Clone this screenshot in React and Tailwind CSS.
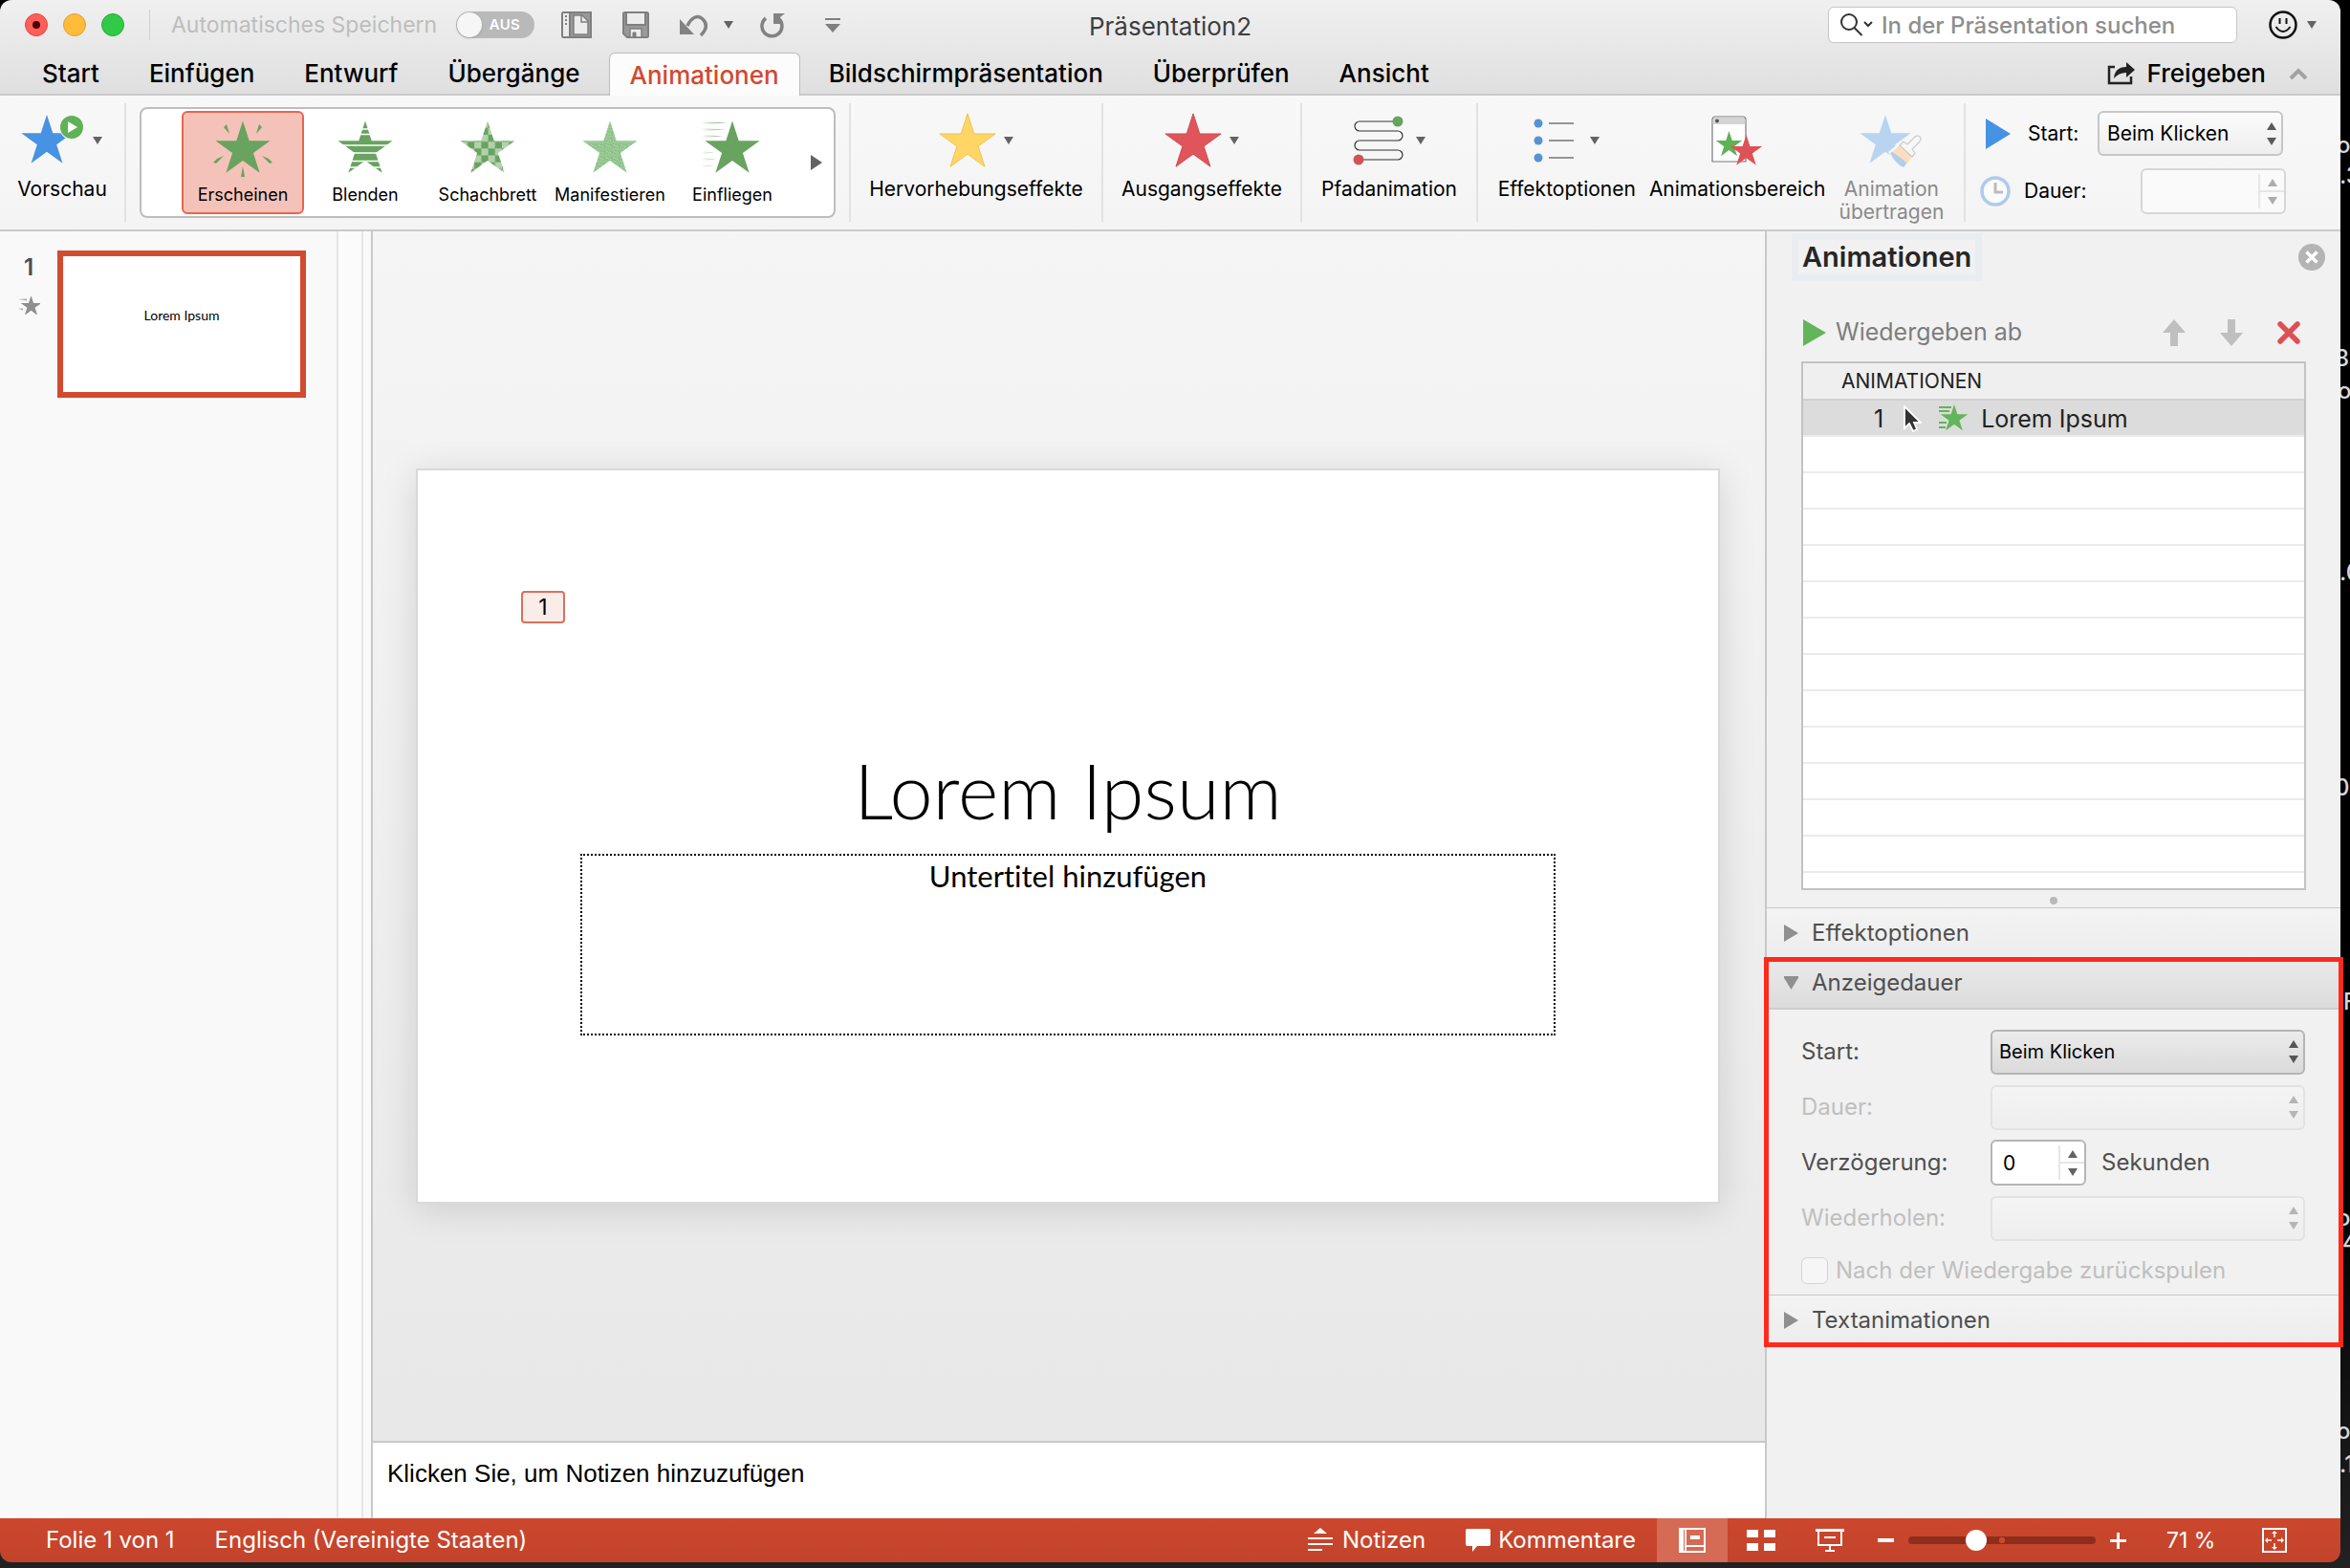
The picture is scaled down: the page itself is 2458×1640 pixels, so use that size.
import React, { useState } from 'react';

const STAR = '50,0 61.2,34.5 97.6,34.5 68.2,55.9 79.4,90.5 50,69.1 20.6,90.5 31.8,55.9 2.4,34.5 38.8,34.5';

const tabs = ['Start', 'Einfügen', 'Entwurf', 'Übergänge', 'Animationen', 'Bildschirmpräsentation', 'Überprüfen', 'Ansicht'];

const desktopLabels = [
  { text: 'o', top: 138, left: 2 },
  { text: '.3', top: 170, left: 5 },
  { text: '8', top: 361, left: 0 },
  { text: 'o', top: 395, left: 3 },
  { text: '.0', top: 585, left: 5 },
  { text: '01', top: 810, left: 0 },
  { text: 'F', top: 1034, left: 9 },
  { text: 'o', top: 1260, left: 2 },
  { text: '4', top: 1286, left: 8 },
  { text: 'o', top: 1483, left: 2 },
  { text: '.1', top: 1518, left: 5 },
];

const Caret = ({ className = '' }) => (
  <svg className={`w-[10px] h-2 shrink-0 fill-[#636363] ${className}`} viewBox="0 0 10 8">
    <path d="M0 0h10L5 8z" />
  </svg>
);

const UpDown = ({ className = '' }) => (
  <svg className={`absolute right-[7px] top-1/2 -translate-y-1/2 w-[10px] h-[24px] pointer-events-none ${className}`} viewBox="0 0 10 24">
    <path d="M0 8h10L5 0zM0 16h10L5 24z" />
  </svg>
);

/* ---------- Effect icons ---------- */

const GalleryStar = ({ fill = '#68a35f', children, before }) => (
  <svg className="w-[68px] h-[60px]" viewBox="0 0 68 60">
    {before}
    <polygon points={STAR} fill={fill} transform="translate(4 0.5) scale(.6)" />
    {children}
  </svg>
);

const AppearIcon = () => (
  <GalleryStar>
    <g fill="#68a35f">
      <path d="M14 7l3-3 3 10zM54 7l-3-3-3 10zM3 44l4-4 7-3-8 8zM65 44l-4-4-7-3 8 8zM34 48l2 11h-4z" />
    </g>
  </GalleryStar>
);

const BlindsIcon = () => (
  <GalleryStar>
    <path d="M0 9h68M0 14.500h68M0 26h68M0 34h68M0 42.500h68M0 49h68" stroke="#fff" strokeWidth="1.500" />
  </GalleryStar>
);

const CheckerIcon = () => (
  <GalleryStar
    fill="url(#checker)"
    before={
      <defs>
        <pattern id="checker" width="24" height="24" x="3" patternUnits="userSpaceOnUse">
          <rect width="24" height="24" fill="#b3d1ae" />
          <path d="M0 0h12v12H0zM12 12h12v12H12z" fill="#68a35f" />
        </pattern>
      </defs>
    }
  />
);

const DissolveIcon = () => (
  <GalleryStar
    fill="url(#dissolve)"
    before={
      <defs>
        <pattern id="dissolve" width="13" height="11" patternUnits="userSpaceOnUse">
          <rect width="13" height="11" fill="#9ccb97" />
          <path d="M0 1h3v2H0zM5 0h2v3H5zM9 2h3v2H9zM2 5h3v2H2zM7 6h2v3H7zM11 7h2v2h-2zM0 9h3v2H0z" fill="#7db677" />
          <path d="M3 3h2v2H3zM8 4h2v1H8zM5 9h2v2H5zM11 0h2v2h-2z" fill="#b4dab0" />
        </pattern>
      </defs>
    }
  />
);

const FlyInIcon = () => (
  <GalleryStar
    before={
      <defs>
        <linearGradient id="speed">
          <stop offset="0" stopColor="#68a35f" stopOpacity="0" />
          <stop offset="1" stopColor="#68a35f" />
        </linearGradient>
      </defs>
    }
  >
    <path d="M2 1l27 1.500-27 1.500zM2 8l24 1.500-24 1.500zM2 15l22 1.500-22 1.500zM2 32l13 1.500-13 1.500zM2 39l15 1.500-15 1.500zM2 46l12 1.500-12 1.500z" fill="url(#speed)" />
  </GalleryStar>
);

const BigStar = ({ fill, stroke }) => (
  <svg className="w-[60px] h-[58px]" viewBox="1 -1 98 94">
    <polygon points={STAR} fill={fill} stroke={stroke} strokeWidth="1.500" />
  </svg>
);

const PreviewIcon = () => (
  <svg className="w-[66px] h-[58px]" viewBox="0 0 66 58">
    <polygon points={STAR} fill="#4692e3" transform="translate(-2 2) scale(.56)" />
    <circle cx="52" cy="15" r="13" fill="#f6f6f6" />
    <circle cx="52" cy="15" r="12" fill="#5fb256" />
    <path d="M48 9v12l10-6z" fill="#fff" />
  </svg>
);

const PathIcon = () => (
  <svg className="w-[58px] h-[56px]" viewBox="0 0 58 56" fill="none">
    <path d="M46 8H7a5 5 0 0 0 0 10h40a5 5 0 0 1 0 10H7a5 5 0 0 0 0 10h40a5 5 0 0 1 0 10H6" stroke="#333" strokeWidth="1.200" />
    <circle cx="47" cy="8" r="5.500" fill="#68a35f" />
    <circle cx="6" cy="48" r="5.500" fill="#cf5458" />
  </svg>
);

const OptionsIcon = () => (
  <svg className="w-[51px] h-[56px]" viewBox="0 0 51 56">
    <g fill="#5792d3">
      <circle cx="5" cy="10" r="4.500" />
      <circle cx="5" cy="28" r="4.500" />
      <circle cx="5" cy="46" r="4.500" />
    </g>
    <path d="M16 10h26M16 28h26M16 46h26" stroke="#333" strokeWidth="1.200" />
  </svg>
);

const PaneIcon = () => (
  <svg className="w-[54px] h-[56px]" viewBox="0 0 54 56">
    <path d="M1 50V6a3 3 0 0 1 3-3h29a3 3 0 0 1 3 3v44z" fill="#fff" stroke="#777" strokeWidth="1.200" />
    <path d="M1.600 11V6a2.400 2.400 0 0 1 2.400-2.400h29a2.400 2.400 0 0 1 2.400 2.400v5z" fill="#d4d4d4" />
    <circle cx="6" cy="7.500" r="2" fill="#555" />
    <polygon points={STAR} fill="#5fb256" transform="translate(4 18) scale(.29)" />
    <polygon points={STAR} fill="#dc5257" transform="translate(19 22) scale(.35)" />
  </svg>
);

const PainterIcon = () => (
  <svg className="w-[66px] h-[58px]" viewBox="0 0 66 58">
    <polygon points={STAR} fill="#b9d4f0" transform="translate(-1 2) scale(.56)" />
    <path d="M30 41l13-11 15 14-9 14q-13-3-19-17z" fill="#f6f6f6" />
    <path d="M32 42l4-2 14 12-4 5q-9-4-14-15z" fill="#b2cdee" />
    <path d="M34 41l8-7 13 12-5 7q-6-6-16-12z" fill="#f9dfbd" />
    <path d="M42 34l4-4 4 3 8-8q3-2 5 0t0 5l-8 8 3 4-3 4z" fill="#f7f7f7" stroke="#cbcbcb" strokeWidth="1.200" />
  </svg>
);

const effects = [
  { name: 'Erscheinen', Icon: AppearIcon },
  { name: 'Blenden', Icon: BlindsIcon },
  { name: 'Schachbrett', Icon: CheckerIcon },
  { name: 'Manifestieren', Icon: DissolveIcon },
  { name: 'Einfliegen', Icon: FlyInIcon },
];

/* ---------- Header ---------- */

const TitleBar = () => (
  <div className="grid grid-cols-[1fr_auto_1fr] items-center h-[52px]">
    <div className="flex items-center pl-[26px]">
      <div className="flex gap-4">
        <button aria-label="Schließen" className="size-6 rounded-full bg-[#ff5f57] border border-[#e2463f] flex items-center justify-center">
          <span className="size-2 rounded-full bg-[#4d0000]" />
        </button>
        <button aria-label="Minimieren" className="size-6 rounded-full bg-[#febc3a] border border-[#e0a02d]" />
        <button aria-label="Vollbild" className="size-6 rounded-full bg-[#33c948] border border-[#25ad37]" />
      </div>
      <div className="w-px h-8 bg-[#cfcfcf] ml-[26px] mr-[22px]" />
      <label htmlFor="autosave" className="text-[23px] text-[#bdbdbd]">Automatisches Speichern</label>
      <span className="relative ml-5 w-[82px] h-7 rounded-full bg-[#b9b9b9] text-white text-[15px] font-semibold flex items-center justify-end pr-[15px] tracking-wide">
        <input id="autosave" type="checkbox" role="switch" className="absolute inset-0 opacity-0" />
        <span className="absolute left-px top-px size-[26px] rounded-full bg-[#f6f6f6] shadow" />
        AUS
      </span>
      <button aria-label="Seitenleiste" className="ml-7">
        <svg className="w-8 h-7" viewBox="0 0 32 28" fill="none" stroke="#7f7f7f" strokeWidth="2">
          <rect x="1" y="1" width="30" height="26" rx="1.500" />
          <path d="M9 1h22v26H9z" fill="#999" />
          <path d="M13 4h9l6 6v14H13z" fill="#ececec" strokeWidth="1.500" />
          <path d="M21 4v7h7" strokeWidth="1.500" />
          <path d="M5 4v2M5 8v2M5 12v2" />
        </svg>
      </button>
      <button aria-label="Speichern" className="ml-8">
        <svg className="size-7" viewBox="0 0 28 28" fill="#ececec" stroke="#7f7f7f" strokeWidth="2">
          <path d="M1 2.500A1.500 1.500 0 0 1 2.500 1h23A1.500 1.500 0 0 1 27 2.500v23a1.500 1.500 0 0 1-1.500 1.500H5l-4-4z" fill="#999" />
          <path d="M4 1h20v13H4z" />
          <path d="M8 27v-9h12v9z" strokeWidth="1.500" />
          <path d="M11 22h3v5h-3z" fill="#7f7f7f" strokeWidth="1" />
        </svg>
      </button>
      <button aria-label="Rückgängig" className="ml-[31px] flex items-center">
        <svg className="w-8 h-7" viewBox="0 0 32 28" fill="none" stroke="#828282" strokeWidth="3.500">
          <path d="M9 15C13 6 20 3 25 8c5 5 4 11-2 17" />
          <path d="M1 8v16h15z" fill="#828282" stroke="none" />
        </svg>
        <Caret className="ml-[15px]" />
      </button>
      <button aria-label="Wiederholen" className="ml-7">
        <svg className="w-7 h-7" viewBox="0 0 28 28" fill="none" stroke="#828282" strokeWidth="3.500">
          <path d="M6 7a10.500 10.500 0 1 0 14 1" />
          <path d="M14 2h12l-5 4v7h-7z" fill="#828282" stroke="none" />
        </svg>
      </button>
      <button aria-label="Symbolleiste anpassen" className="ml-10">
        <svg className="w-4 h-[15px]" viewBox="0 0 16 15" fill="#7f7f7f">
          <path d="M0 0h16v2H0zM0 6h16l-8 9z" />
        </svg>
      </button>
    </div>
    <h1 className="pt-[2px] text-[26px] text-[#3e3e3e]">Präsentation2</h1>
    <div className="flex items-center justify-end pr-[25px]">
      <label className="flex items-center w-[428px] h-[38px] bg-white rounded-md border border-[#c6c6c6] pl-[11px]">
        <svg className="w-9 h-6 shrink-0" viewBox="0 0 36 24" fill="none" stroke="#333" strokeWidth="2">
          <circle cx="10" cy="9" r="8" />
          <path d="M15.500 15l8 8M26 9l4 4 4-4" />
        </svg>
        <input
          type="search"
          aria-label="Suchen"
          placeholder="In der Präsentation suchen"
          className="ml-2 pt-[2px] w-full bg-transparent outline-none text-[24px] font-medium placeholder:text-[#8e8e8e]"
        />
      </label>
      <button aria-label="Feedback" className="ml-[33px] flex items-center gap-[10px]">
        <svg className="size-[30px]" viewBox="0 0 30 30" fill="none" stroke="#111" strokeWidth="2.500">
          <circle cx="15" cy="15" r="13.500" />
          <path d="M11.500 8v6M18.500 8v6M7.500 17q7.500 10 15 0" strokeWidth="2" />
        </svg>
        <Caret />
      </button>
    </div>
  </div>
);

const TabBar = ({ active, onSelect }) => (
  <div className="flex items-end h-[48px] border-b-2 border-[#cacaca] pl-[18px] pr-[34px]">
    {tabs.map((tab) => (
      <button
        key={tab}
        onClick={() => onSelect(tab)}
        className={`text-[26px] font-medium whitespace-nowrap ${
          tab === active
            ? 'h-[45px] -mb-[2px] mx-1 px-[21px] rounded-t-md border border-b-0 border-[#bcbcbc] bg-[#fcfcfc] text-[#d24a2f]'
            : 'h-[43px] px-[26px] text-black'
        }`}
      >
        {tab}
      </button>
    ))}
    <button className="ml-auto h-[43px] flex items-center gap-3 text-[26px] font-medium">
      <svg className="w-[30px] h-6" viewBox="0 0 30 24" fill="none" stroke="#222" strokeWidth="2.500">
        <path d="M8 5H2v17h23v-7" />
        <path d="M7 17Q8 5 20 5V0l9 8-9 8v-5q-8 0-13 6z" fill="#222" stroke="none" />
      </svg>
      Freigeben
    </button>
    <button aria-label="Menüband minimieren" className="ml-6 h-[43px]">
      <svg className="w-5 h-3" viewBox="0 0 20 12" fill="none" stroke="#a2a2a2" strokeWidth="4">
        <path d="M2 11l8-8 8 8" />
      </svg>
    </button>
  </div>
);

/* ---------- Ribbon ---------- */

const RibbonButton = ({ label, icon, menu, disabled }) => (
  <button disabled={disabled} className="flex flex-col items-center pt-2 disabled:text-[#8a8a8a]">
    <span className="flex items-center h-[62px] gap-2">
      {icon}
      {menu && <Caret />}
    </span>
    <span className="mt-2 text-[21px] leading-6 whitespace-pre-line text-center">{label}</span>
  </button>
);

const Divider = () => <div className="w-[2px] shrink-0 bg-[#e2e2e2]" />;

const Stepper = ({ muted }) => (
  <span className="absolute right-[2px] inset-y-[6px] w-[27px] flex flex-col border-l-2 border-[#e6e6e6]">
    <button type="button" disabled={muted} aria-label="Erhöhen" className="flex-1 flex items-center justify-center border-b border-[#e6e6e6]">
      <Caret className={`rotate-180 ${muted ? 'opacity-50' : ''}`} />
    </button>
    <button type="button" disabled={muted} aria-label="Verringern" className="flex-1 flex items-center justify-center border-t border-[#e6e6e6]">
      <Caret className={muted ? 'opacity-50' : ''} />
    </button>
  </span>
);

const Ribbon = () => {
  const [effect, setEffect] = useState('Erscheinen');

  return (
    <div className="flex h-[142px] pt-2 pb-2 bg-linear-to-b from-[#f8f8f8] to-[#f4f4f4] border-b-2 border-[#cacaca]">
      <div className="w-[130px] shrink-0 flex justify-center">
        <RibbonButton label="Vorschau" icon={<PreviewIcon />} menu />
      </div>
      <Divider />

      {/* Entrance effects */}
      <div className="w-[728px] h-[116px] mt-1 mx-[14px] shrink-0 flex items-center pl-[42px] bg-white rounded-lg border-2 border-[#bdbdbd]">
        {effects.map(({ name, Icon }) => (
          <button
            key={name}
            onClick={() => setEffect(name)}
            className={`w-32 h-[108px] rounded-md border-2 flex flex-col items-center pt-2 ${
              effect === name ? 'bg-[#f4c2b9] border-[#e8654c]' : 'border-transparent'
            }`}
          >
            <Icon />
            <span className="mt-[6px] text-[18px] leading-6">{name}</span>
          </button>
        ))}
        <button aria-label="Weitere Effekte" className="ml-[18px]">
          <svg className="w-3 h-4" viewBox="0 0 12 16" fill="#636363">
            <path d="M0 0v16l12-8z" />
          </svg>
        </button>
      </div>

      <Divider />
      <div className="w-[262px] shrink-0 flex justify-center">
        <RibbonButton label="Hervorhebungseffekte" icon={<BigStar fill="#ffd566" stroke="#ecc14f" />} menu />
      </div>
      <Divider />
      <div className="w-[206px] shrink-0 flex justify-center">
        <RibbonButton label="Ausgangseffekte" icon={<BigStar fill="#df5559" stroke="#cf484d" />} menu />
      </div>
      <Divider />
      <div className="w-[182px] shrink-0 flex justify-center">
        <RibbonButton label="Pfadanimation" icon={<PathIcon />} menu />
      </div>
      <Divider />
      <div className="w-[508px] shrink-0 flex items-start justify-center gap-[14px]">
        <RibbonButton label="Effektoptionen" icon={<OptionsIcon />} menu />
        <RibbonButton label="Animationsbereich" icon={<PaneIcon />} />
        <RibbonButton label={'Animation\nübertragen'} icon={<PainterIcon />} disabled />
      </div>
      <Divider />

      <div className="flex flex-col gap-[13px] pl-[15px] pt-2 text-[21px]">
        <div className="flex items-center">
          <svg className="w-8 h-8 mr-[18px]" viewBox="0 0 32 32">
            <path d="M6 0v32l26-16z" fill="#4692e3" />
          </svg>
          <label htmlFor="ribbon-start" className="w-[73px]">Start:</label>
          <span className="relative">
            <select id="ribbon-start" className="appearance-none w-[194px] h-[47px] pl-2 rounded-md border-2 border-[#c6c6c6] bg-linear-to-b from-[#fbfbfb] to-[#eeeeee] text-[21px]">
              <option>Beim Klicken</option>
            </select>
            <UpDown className="fill-[#5a5a5a]" />
          </span>
        </div>
        <div className="flex items-center">
          <svg className="w-8 h-8 mr-[14px]" viewBox="0 0 32 32" fill="none">
            <circle cx="16" cy="16" r="14" fill="#fbfbfb" stroke="#aecbec" strokeWidth="3.500" />
            <path d="M16 7v10h8" stroke="#bbb" strokeWidth="3" />
          </svg>
          <label htmlFor="ribbon-duration" className="w-[122px]">Dauer:</label>
          <span className="relative">
            <input id="ribbon-duration" disabled className="w-[152px] h-[48px] rounded-md border-2 border-[#d6d6d6] bg-[#fafafa]" />
            <Stepper muted />
          </span>
        </div>
      </div>
    </div>
  );
};

/* ---------- Workspace ---------- */

const SlideList = () => (
  <aside className="flex w-[390px] shrink-0 bg-[#f9f9f9] border-r-2 border-[#c8c8c8]">
    <div className="flex-1 flex items-start pt-5">
      <div className="w-[60px] shrink-0 flex flex-col items-center gap-4 pt-1">
        <span className="text-[24px] leading-7 font-semibold text-[#4d4d4d]">1</span>
        <svg className="w-[24px] h-[19px]" viewBox="0 0 24 19">
          <polygon points={STAR} fill="#8f8f8f" stroke="#8f8f8f" strokeWidth="6" transform="translate(5 1) scale(.19)" />
          <path d="M1 3l9-.500v2zM1 13l5-.500v2z" fill="#aaa" />
        </svg>
      </div>
      <button className="w-[260px] h-[154px] bg-white border-[6px] border-[#d24a2f] flex justify-center pt-[52px] text-[14px] leading-5 [font-family:Lato,sans-serif]">
        Lorem Ipsum
      </button>
    </div>
    <div className="w-[28px] border-x-2 border-[#e6e6e6] bg-[#fbfbfb] mr-[8px]" />
  </aside>
);

const SlideEditor = () => (
  <main className="flex-1 min-w-0 flex flex-col">
    <div className="flex-1 flex items-center pl-[45px] pr-[47px] bg-linear-to-b from-[#f5f5f5] to-[#e8e8e8]">
      <div className="relative w-full aspect-[1364/769] bg-white border-2 border-[#d9d9d9] shadow-[0_6px_36px_rgba(0,0,0,0.13)] flex flex-col items-center pt-[286px] [font-family:Lato,Carlito,sans-serif] [font-variant-ligatures:none]">
        <span className="absolute left-[108px] top-[126px] w-[46px] h-[34px] rounded border-2 border-[#d9705b] bg-[#f9ece9] text-[23px] leading-[30px] text-center [font-family:Inter,sans-serif]">
          1
        </span>
        <h2 className="text-[81px] leading-[96px] font-light">Lorem Ipsum</h2>
        <p className="mt-[19px] w-[75%] h-[190px] border-2 border-dotted border-black text-center text-[31px] leading-[42px]">
          Untertitel hinzufügen
        </p>
      </div>
    </div>
    <div className="h-[81px] bg-white border-t-2 border-[#c8c8c8] px-[15px] pt-[14px] text-[26px] leading-9 [font-family:Liberation_Sans,Arial,sans-serif]">
      Klicken Sie, um Notizen hinzuzufügen
    </div>
  </main>
);

/* ---------- Animation pane ---------- */

const Disclosure = ({ label, open }) => (
  <button
    aria-expanded={!!open}
    className={`w-full flex items-center gap-[14px] pl-[18px] text-[24px] text-[#4f4f4f] ${
      open ? 'h-[54px] bg-linear-to-b from-[#eaeaea] to-[#dcdcdc] border-b-2 border-[#cdcdcd]' : 'h-[53px] bg-linear-to-b from-[#f3f3f3] to-[#ededed] border-t border-[#c6c6c6]'
    }`}
  >
    <svg className="w-[15px] h-[18px]" viewBox="0 0 15 18" fill="#8f8f8f">
      {open ? <path d="M-1 2h17L7.500 16z" /> : <path d="M0 0v18l15-9z" />}
    </svg>
    {label}
  </button>
);

const FieldRow = ({ id, label, muted, children }) => (
  <div className="flex items-center h-[58px]">
    <label htmlFor={id} className={`w-[198px] ${muted ? 'text-[#bfbfbf]' : ''}`}>{label}</label>
    {children}
  </div>
);

const PaneSelect = ({ id, disabled, children }) => (
  <span className="relative">
    <select
      id={id}
      disabled={disabled}
      className="appearance-none w-[329px] h-[47px] pl-[7px] rounded-md border-2 border-[#b5b5b5] bg-linear-to-b from-[#ececec] to-[#dadada] text-[20px] text-black disabled:border-[#e2e2e2] disabled:from-[#f4f4f4] disabled:to-[#eeeeee]"
    >
      {children}
    </select>
    <UpDown className={disabled ? 'fill-[#b5b5b5]' : 'fill-[#555]'} />
  </span>
);

const AnimationPane = () => (
  <aside className="w-[602px] shrink-0 bg-[#f1f1f1] border-l-2 border-[#c8c8c8]">
    <div className="flex items-start justify-between pl-[26px] pr-[16px] pt-[2px]">
      <h2 className="border-[7px] border-[#e9edf2] h-[50px] px-1 text-[29px] leading-9 font-semibold text-[#262626]">Animationen</h2>
      <button aria-label="Bereich schließen" className="mt-[11px]">
        <svg className="size-7" viewBox="0 0 28 28">
          <circle cx="14" cy="14" r="14" fill="#b4b4b4" />
          <path d="M8.500 8.500l11 11M19.500 8.500l-11 11" stroke="#fff" strokeWidth="3.500" />
        </svg>
      </button>
    </div>

    <div className="flex items-center mt-[36px] h-[36px] pl-[38px] pr-[42px] text-[25px] text-[#7d7d7d]">
      <button className="flex items-center gap-[10px] mr-auto">
        <svg className="w-6 h-7" viewBox="0 0 24 28">
          <path d="M0 0v28l24-14z" fill="#62b559" />
        </svg>
        Wiedergeben ab
      </button>
      <button aria-label="Nach oben">
        <svg className="w-6 h-7" viewBox="0 0 24 28" fill="#bfbfbf">
          <path d="M12 0l12 14h-8v14H8V14H0z" />
        </svg>
      </button>
      <button aria-label="Nach unten" className="mx-9">
        <svg className="w-6 h-7" viewBox="0 0 24 28" fill="#bfbfbf">
          <path d="M12 28L0 14h8V0h8v14h8z" />
        </svg>
      </button>
      <button aria-label="Löschen">
        <svg className="size-6" viewBox="0 0 24 24" stroke="#dc5055" strokeWidth="5.500" strokeLinecap="round">
          <path d="M3 3l18 18M21 3L3 21" />
        </svg>
      </button>
    </div>

    <div className="ml-[36px] mr-[36px] mt-[12px] h-[553px] overflow-hidden border-2 border-[#c2c2c2] bg-white">
      <table className="w-full border-collapse text-[#222]">
        <thead>
          <tr className="h-[38px] bg-[#efefef] border-b-2 border-[#d0d0d0]">
            <th className="pl-[40px] text-left text-[21px] leading-8 font-normal">ANIMATIONEN</th>
          </tr>
        </thead>
        <tbody>
          <tr className="h-[38px] bg-[#dcdcdc]">
            <td className="relative p-0">
              <div className="flex items-center pl-[74px] pt-[2px] text-[25px] leading-8">
                1
                <svg className="w-[32px] h-[30px] ml-[57px] mr-[13px]" viewBox="0 0 32 30" fill="#62b559">
                  <polygon points={STAR} transform="translate(2 0) scale(.3)" />
                  <path d="M1 2h13v2H1zM1 6h11v2H1zM1 18h8v2H1zM1 23h7v2H1z" />
                </svg>
                Lorem Ipsum
              </div>
              {/* Pointer */}
              <svg className="absolute left-[105px] top-[5px] w-[19px] h-[28px]" viewBox="0 0 19 28">
                <path d="M1 1v23l5-5 4 8 4-2-3-7h7z" fill="#333" stroke="#fff" strokeWidth="1.800" />
              </svg>
            </td>
          </tr>
          {Array.from({ length: 13 }, (_, i) => (
            <tr key={i} className="h-[38px] border-y-2 border-[#ebebeb]">
              <td />
            </tr>
          ))}
        </tbody>
      </table>
    </div>
    <div className="size-2 rounded-full bg-[#b9b9b9] mx-auto mt-[7px] mb-[3px]" />

    <Disclosure label="Effektoptionen" />

    <div className="relative">
      <Disclosure label="Anzeigedauer" open />
      <div className="pt-[15px] pl-[36px] pb-2 text-[24px] text-[#4f4f4f]">
        <FieldRow id="start" label="Start:">
          <PaneSelect id="start">
            <option>Beim Klicken</option>
          </PaneSelect>
        </FieldRow>
        <FieldRow id="duration" label="Dauer:" muted>
          <PaneSelect id="duration" disabled />
        </FieldRow>
        <FieldRow id="delay" label="Verzögerung:">
          <span className="relative">
            <input id="delay" defaultValue="0" className="w-[100px] h-[48px] pl-[11px] rounded-md border-2 border-[#b5b5b5] bg-white text-[21px] text-black" />
            <Stepper />
          </span>
          <span className="ml-4">Sekunden</span>
        </FieldRow>
        <FieldRow id="repeat" label="Wiederholen:" muted>
          <PaneSelect id="repeat" disabled />
        </FieldRow>
        <label className="flex items-center gap-2 h-[43px] pt-[8px] text-[#bfbfbf]">
          <input type="checkbox" disabled className="appearance-none size-7 rounded-md border border-[#d3d3d3] bg-[#f6f6f6]" />
          Nach der Wiedergabe zurückspulen
        </label>
      </div>
      <Disclosure label="Textanimationen" />
      <div className="absolute -inset-x-[3px] -top-px -bottom-[2px] border-[5px] border-[#ff2a1c] pointer-events-none z-10" />
    </div>
  </aside>
);

/* ---------- Status bar ---------- */

const StatusBar = () => {
  const [zoom, setZoom] = useState(71);

  return (
    <footer className="flex items-center h-[46px] rounded-b-xl bg-linear-to-b from-[#cc472e] to-[#c2432b] text-white text-[24px] pl-12">
      <span>Folie 1 von 1</span>
      <button className="ml-[42px]">Englisch (Vereinigte Staaten)</button>
      <button className="ml-auto flex items-center gap-[10px]">
        <svg className="w-[26px] h-[26px]" viewBox="0 0 26 26" fill="#fff">
          <path d="M13 0l7 6H6zM0 10h26v2H0zM0 16h26v2H0zM0 22h15v2H0z" />
        </svg>
        Notizen
      </button>
      <button className="ml-[42px] flex items-center gap-2">
        <svg className="w-[26px] h-[24px]" viewBox="0 0 26 24" fill="#fff">
          <path d="M2 0h22q2 0 2 2v14q0 2-2 2H12l-5 6v-6H2q-2 0-2-2V2q0-2 2-2z" />
        </svg>
        Kommentare
      </button>
      <button aria-label="Normal" className="ml-[22px] w-[74px] h-full flex items-center justify-center bg-[#d56a55]">
        <svg className="w-7 h-[26px]" viewBox="0 0 28 26" fill="none" stroke="#fff" strokeWidth="2">
          <path d="M1 1h26v24H1zM7 1v24M7 19h20" />
          <path d="M3 1v24" strokeWidth="4" />
          <path d="M12 8h10v4H12z" fill="#fff" stroke="none" />
        </svg>
      </button>
      <button aria-label="Foliensortierung" className="ml-5">
        <svg className="w-[30px] h-[22px]" viewBox="0 0 30 22" fill="#fff">
          <path d="M0 0h12v8H0zM18 0h12v8H18zM0 14h12v8H0zM18 14h12v8H18z" />
        </svg>
      </button>
      <button aria-label="Bildschirmpräsentation" className="ml-[42px]">
        <svg className="w-[30px] h-6" viewBox="0 0 30 24" fill="none" stroke="#fff" strokeWidth="2">
          <path d="M0 1.500h30" strokeWidth="3" />
          <path d="M3 2v15h24V2M9 9h12M15 17v6M10 23h10" />
        </svg>
      </button>
      <button aria-label="Verkleinern" className="ml-[35px] w-[17px] h-[4px] bg-white" />
      <input
        type="range"
        aria-label="Zoom"
        min="12"
        max="182"
        value={zoom}
        onChange={(e) => setZoom(Number(e.target.value))}
        className="ml-[15px] appearance-none w-[196px] h-2 rounded-full bg-[radial-gradient(circle_at_50%_50%,#cc472e_3px,#8d2e1d_3px)] [&::-webkit-slider-thumb]:appearance-none [&::-webkit-slider-thumb]:size-[22px] [&::-webkit-slider-thumb]:rounded-full [&::-webkit-slider-thumb]:bg-white"
      />
      <button aria-label="Vergrößern" className="ml-[15px]">
        <svg className="w-[17px] h-[17px]" viewBox="0 0 17 17" stroke="#fff" strokeWidth="3">
          <path d="M0 8.500h17M8.500 0v17" />
        </svg>
      </button>
      <output className="ml-[42px] w-[53px] whitespace-nowrap text-[23px]">{zoom} %</output>
      <button aria-label="An Fenster anpassen" className="ml-[47px] mr-[56px]">
        <svg className="w-[26px] h-[26px]" viewBox="0 0 26 26" fill="none" stroke="#fff" strokeWidth="2">
          <path d="M1 1h24v24H1z" />
          <path d="M13 4v6M13 16v6M4 13h6M16 13h6" strokeWidth="1.500" />
          <path d="M10 6l3-3 3 3zM10 20l3 3 3-3zM6 10l-3 3 3 3zM20 10l3 3-3 3z" fill="#fff" stroke="none" />
        </svg>
      </button>
    </footer>
  );
};

export default function App() {
  const [tab, setTab] = useState('Animationen');

  return (
    <div className="relative min-h-screen flex flex-col overflow-hidden bg-linear-to-b from-black from-60% to-[#222] pr-[10px] pb-[6px] text-black [font-family:Inter,sans-serif]">
      {/* Desktop icons showing past the window edge */}
      <div aria-hidden="true" className="absolute inset-y-0 right-0 w-4 overflow-hidden text-[24px] leading-7 font-medium text-[#d8d8d8]">
        {desktopLabels.map((item) => (
          <span key={item.top} className="absolute" style={{ top: item.top, left: item.left }}>{item.text}</span>
        ))}
      </div>

      <div className="relative flex-1 flex flex-col">
        <header className="rounded-t-xl bg-linear-to-b from-[#f0f0f0] to-[#dfdfdf]">
          <TitleBar />
          <TabBar active={tab} onSelect={setTab} />
        </header>
        <Ribbon />
        <div className="flex-1 flex">
          <SlideList />
          <SlideEditor />
          <AnimationPane />
        </div>
        <StatusBar />
      </div>
    </div>
  );
}
